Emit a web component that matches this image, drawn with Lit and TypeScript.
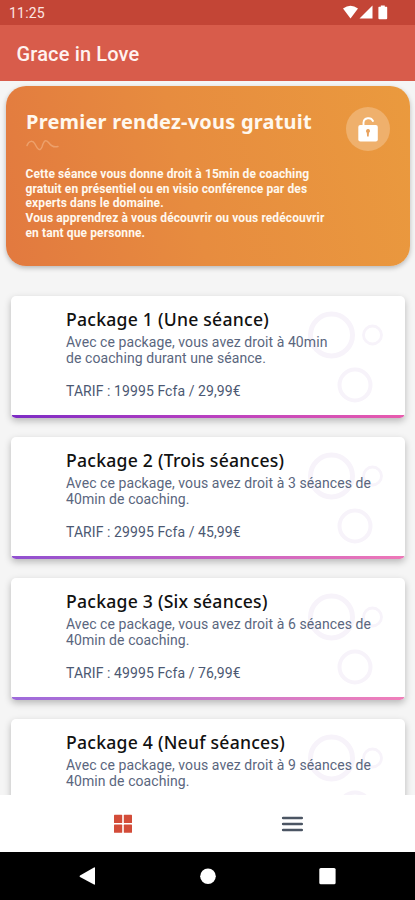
import { LitElement, html, css } from "lit";
import { customElement, property } from "lit/decorators.js";

@customElement("package-card")
class PackageCard extends LitElement {
  @property() heading = "";
  @property({ attribute: false }) lines: string[] = [];
  @property() price = "";
  @property() tone = "violet";

  static styles = css`
    :host { display: block; }
    .card {
      position: relative;
      box-sizing: border-box;
      height: 122px;
      padding: 10px 10px 0 55px;
      border-radius: 5px;
      background: #fff;
      box-shadow: 0 3px 7px rgba(0, 0, 0, 0.25);
      overflow: hidden;
    }
    .circles { position: absolute; top: 0; right: 0; width: 110px; height: 122px; }
    .bar { position: absolute; left: 1px; right: 1px; bottom: 0; height: 3px; }
    .deep { background: linear-gradient(90deg, #7d2cc4, #b83fc0 50%, #e85cae); }
    .violet { background: linear-gradient(90deg, #9050d0, #c45fc4 50%, #ee78b8); }
    .soft { background: linear-gradient(90deg, #9d6adb, #c878cc 50%, #f07fba); }
    .text { position: relative; white-space: nowrap; }
    .heading {
      font: 500 17.6px/26px "Noto Sans", sans-serif;
      letter-spacing: 0.24px;
      color: #111;
    }
    .body { font: 400 14px/16.4px Roboto, sans-serif; color: #5a667e; letter-spacing: 0.08px; margin-top: 1.5px; }
    .price { font: 400 14px/17px Roboto, sans-serif; color: #4b5872; letter-spacing: 0.08px; margin-top: 17px; }
  `;

  render() {
    return html`<div class="card">
      <svg class="circles" viewBox="0 0 110 122" fill="none" stroke="#f7f3fa">
        <circle cx="36.500" cy="39" r="21" stroke-width="5" />
        <circle cx="77.500" cy="39" r="9" stroke-width="2.800" />
        <circle cx="60" cy="89" r="15.500" stroke-width="4" />
      </svg>
      <div class="text">
        <div class="heading">${this.heading}</div>
        <div class="body">${this.lines.map((l) => html`<div>${l}</div>`)}</div>
        <div class="price">${this.price}</div>
      </div>
      <div class="bar ${this.tone}"></div>
    </div>`;
  }
}

const packages = [
  { heading: "Package 1 (Une séance)", lines: ["Avec ce package, vous avez droit à 40min", "de coaching durant une séance."], price: "TARIF : 19995 Fcfa / 29,99€", tone: "deep" },
  { heading: "Package 2 (Trois séances)", lines: ["Avec ce package, vous avez droit à 3 séances de", "40min de coaching."], price: "TARIF : 29995 Fcfa / 45,99€", tone: "violet" },
  { heading: "Package 3 (Six séances)", lines: ["Avec ce package, vous avez droit à 6 séances de", "40min de coaching."], price: "TARIF : 49995 Fcfa / 76,99€", tone: "soft" },
  { heading: "Package 4 (Neuf séances)", lines: ["Avec ce package, vous avez droit à 9 séances de", "40min de coaching."], price: "", tone: "soft" },
];

const intro = [
  "Cette séance vous donne droit à 15min de coaching",
  "gratuit en présentiel ou en visio conférence par des",
  "experts dans le domaine.",
  "Vous apprendrez à vous découvrir ou vous redécouvrir",
  "en tant que personne.",
];

@customElement("app-root")
class AppRoot extends LitElement {
  static styles = css`
    :host {
      display: flex;
      flex-direction: column;
      width: 415px;
      height: 900px;
      overflow: hidden;
      background: #f5f5f5;
      font-family: Roboto, sans-serif;
    }
    .status {
      flex: none;
      display: flex;
      justify-content: space-between;
      height: 25px;
      padding-left: 9px;
      background: #c34536;
      color: #fde6e2;
      font-size: 14px;
      line-height: 27px;
      letter-spacing: 0.2px;
    }
    .signals { width: 80px; height: 25px; }
    .appbar {
      flex: none;
      height: 56px;
      box-sizing: border-box;
      padding-left: 16.5px;
      background: #d85c4b;
      color: #fff3f0;
      font-size: 20px;
      font-weight: 500;
      letter-spacing: 0.15px;
      line-height: 58px;
    }
    .content { flex: 1; min-height: 0; overflow: hidden; padding: 5px 5px 0 6px; }
    .hero {
      display: flex;
      justify-content: space-between;
      box-sizing: border-box;
      height: 180px;
      padding: 20px 20px 0;
      border-radius: 20px;
      background: linear-gradient(76deg, #e2793f, #e78c3f 45%, #ea9a3e);
      box-shadow: 0 2px 5px rgba(0, 0, 0, 0.25);
      color: #fff8ee;
      white-space: nowrap;
    }
    .title { font: 700 20px/30px "Noto Sans", sans-serif; letter-spacing: 0.21px; padding-top: 1px; }
    .wave { display: block; width: 34px; height: 14px; margin: 1px 0 15px; }
    .intro { font-size: 12px; font-weight: 700; line-height: 14.7px; letter-spacing: 0.11px; margin-left: -0.5px; }
    .lock { flex: none; width: 44px; height: 44px; margin-top: 1px; }
    .list { display: grid; gap: 19px; padding: 30px 5px 0 5px; }
    .tabs {
      flex: none;
      display: flex;
      justify-content: space-around;
      align-items: center;
      height: 57px;
      padding: 0 38px;
      background: #fff;
    }
    .tabs svg { width: 24px; height: 24px; }
    .system { flex: none; height: 48px; background: #000; }
    .system svg { display: block; width: 415px; height: 48px; }
  `;

  render() {
    return html`
      <div class="status">
        <span>11:25</span>
        <svg class="signals" viewBox="0 0 80 25" fill="#fff">
          <path d="M8 8.500Q15.500 3 23 8.500L15.500 18.500Z" />
          <path d="M37.500 5.500V18.500H24.500Z" />
          <path d="M44 6.800h1.800V5.500h4v1.300h1.800q.6 0 .6.600V18.300q0 1-1 1h-6.800q-1 0-1-1V7.400q0-.6.600-.6Z" />
        </svg>
      </div>
      <div class="appbar">Grace in Love</div>
      <div class="content">
        <div class="hero">
          <div>
            <div class="title">Premier rendez-vous gratuit</div>
            <svg class="wave" viewBox="0 0 34 14" fill="none" stroke="#eda06b" stroke-width="1.500" stroke-linecap="round">
              <path d="M1 7.500C3 2 7 2.500 9 6C12 12 14 13.500 16 9C18 2 20 1 23 5C25 8 28 9.500 32 8.500" />
            </svg>
            <div class="intro">${intro.map((l) => html`<div>${l}</div>`)}</div>
          </div>
          <svg class="lock" viewBox="0 0 44 44">
            <circle cx="22" cy="22" r="22" fill="#efb06c" />
            <path d="M17.500 18.500V15.500a5 4.800 0 0 1 9.500-1.500" fill="none" stroke="#fff" stroke-width="1.900" stroke-linecap="round" />
            <rect x="12.300" y="18" width="19.500" height="16.500" rx="2" fill="#fff" />
            <path d="M20 24a2 2 0 1 1 3 1.700L22.700 29.500h-1.600l-.3-3.800a2 2 0 0 1-.8-1.700Z" fill="#e9a35f" />
          </svg>
        </div>
        <div class="list">
          ${packages.map((p) => html`<package-card .heading=${p.heading} .lines=${p.lines} .price=${p.price} .tone=${p.tone}></package-card>`)}
        </div>
      </div>
      <div class="tabs">
        <svg viewBox="0 0 24 24" fill="#d34c39">
          <rect x="3" y="2.800" width="8.200" height="8.200" rx=".6" /><rect x="12.800" y="2.800" width="8.200" height="8.200" rx=".6" />
          <rect x="3" y="12.600" width="8.200" height="8.200" rx=".6" /><rect x="12.800" y="12.600" width="8.200" height="8.200" rx=".6" />
        </svg>
        <svg viewBox="0 0 24 24" stroke="#4b5563" stroke-width="2.700" stroke-linecap="round">
          <path d="M3.200 6H21.700M3.200 12H21.700M3.200 18H21.700" />
        </svg>
      </div>
      <div class="system">
        <svg viewBox="0 0 415 48" fill="#fff">
          <path d="M94 15.500q1-.5 1 .5V32q0 1-1 .5L80 25q-1-.7 0-1.500Z" />
          <circle cx="208" cy="24.300" r="7.800" />
          <rect x="319.300" y="16" width="16.300" height="16.300" rx="1.500" />
        </svg>
      </div>
    `;
  }
}
